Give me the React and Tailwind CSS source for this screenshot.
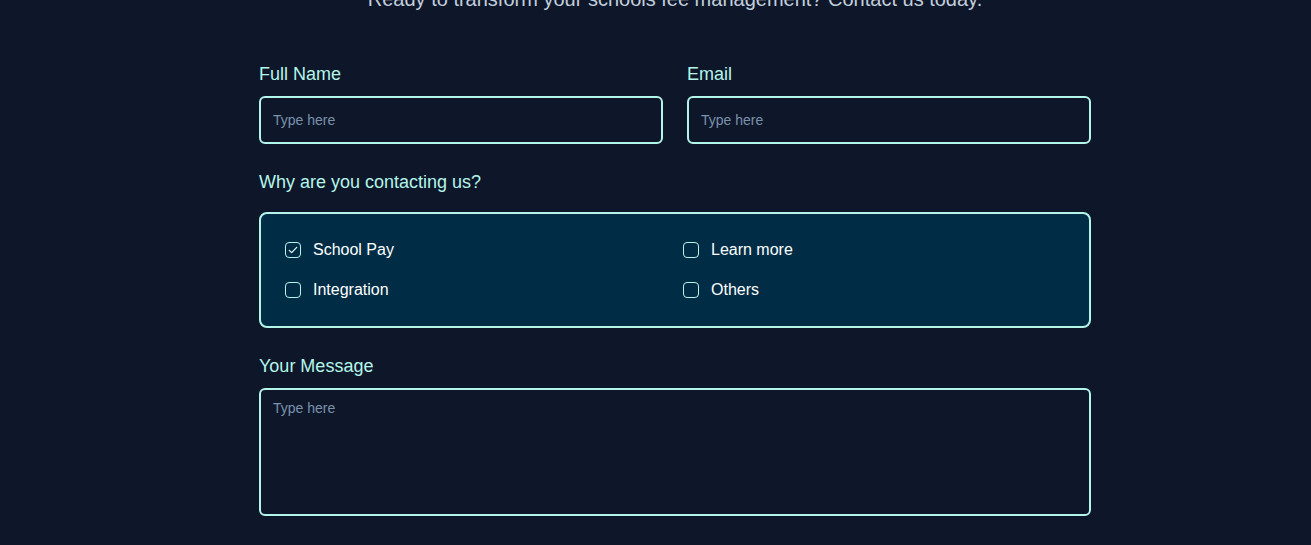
import React from "react";

function Check({ checked }) {
  return (
    <span className="flex h-4 w-4 shrink-0 items-center justify-center rounded-[4px] border-[1.5px] border-[#b4f5ea]">
      {checked && (
        <svg viewBox="0 0 16 16" className="h-3 w-3" fill="none" stroke="#e6fffa" strokeWidth="1.6" strokeLinecap="round" strokeLinejoin="round">
          <path d="M3 8.5l3.2 3L13 4.5" />
        </svg>
      )}
    </span>
  );
}

function Option({ label, checked }) {
  return (
    <label className="flex h-6 items-center gap-3 text-[16px] text-white">
      <Check checked={checked} />
      <span>{label}</span>
    </label>
  );
}

export default function App() {
  return (
    <div className="min-h-[545px] w-full overflow-hidden bg-[#0e1729] font-['Liberation_Sans',Arial,sans-serif]">
      <div className="ml-[259px] w-[832px]">
        <p className="mt-[-15px] text-center text-[20px] leading-7 text-[#c3cedd]">
          Ready to transform your schools fee management? Contact us today.
        </p>
        <div className="mt-[47px] grid grid-cols-2 gap-6">
          <div>
            <div className="text-[18px] leading-7 text-[#b4f5ea]">Full Name</div>
            <input
              placeholder="Type here"
              className="mt-[8px] h-12 w-full rounded-md border-2 border-[#b4f5ea] bg-transparent px-3 text-[14px] text-white outline-none placeholder:text-[#7b91ab]"
            />
          </div>
          <div>
            <div className="text-[18px] leading-7 text-[#b4f5ea]">Email</div>
            <input
              placeholder="Type here"
              className="mt-[8px] h-12 w-full rounded-md border-2 border-[#b4f5ea] bg-transparent px-3 text-[14px] text-white outline-none placeholder:text-[#7b91ab]"
            />
          </div>
        </div>
        <div className="mt-[24px] text-[18px] leading-7 text-[#b4f5ea]">Why are you contacting us?</div>
        <div className="mt-[16px] grid grid-cols-2 gap-x-4 gap-y-4 rounded-lg border-2 border-[#b4f5ea] bg-[#002d45] p-6">
          <Option label="School Pay" checked />
          <Option label="Learn more" />
          <Option label="Integration" />
          <Option label="Others" />
        </div>
        <div className="mt-[24px] text-[18px] leading-7 text-[#b4f5ea]">Your Message</div>
        <textarea
          placeholder="Type here"
          className="mt-[8px] block h-32 w-full resize-none rounded-md border-2 border-[#b4f5ea] bg-transparent px-3 py-2 text-[14px] leading-5 text-white outline-none placeholder:text-[#7b91ab]"
        />
      </div>
    </div>
  );
}
